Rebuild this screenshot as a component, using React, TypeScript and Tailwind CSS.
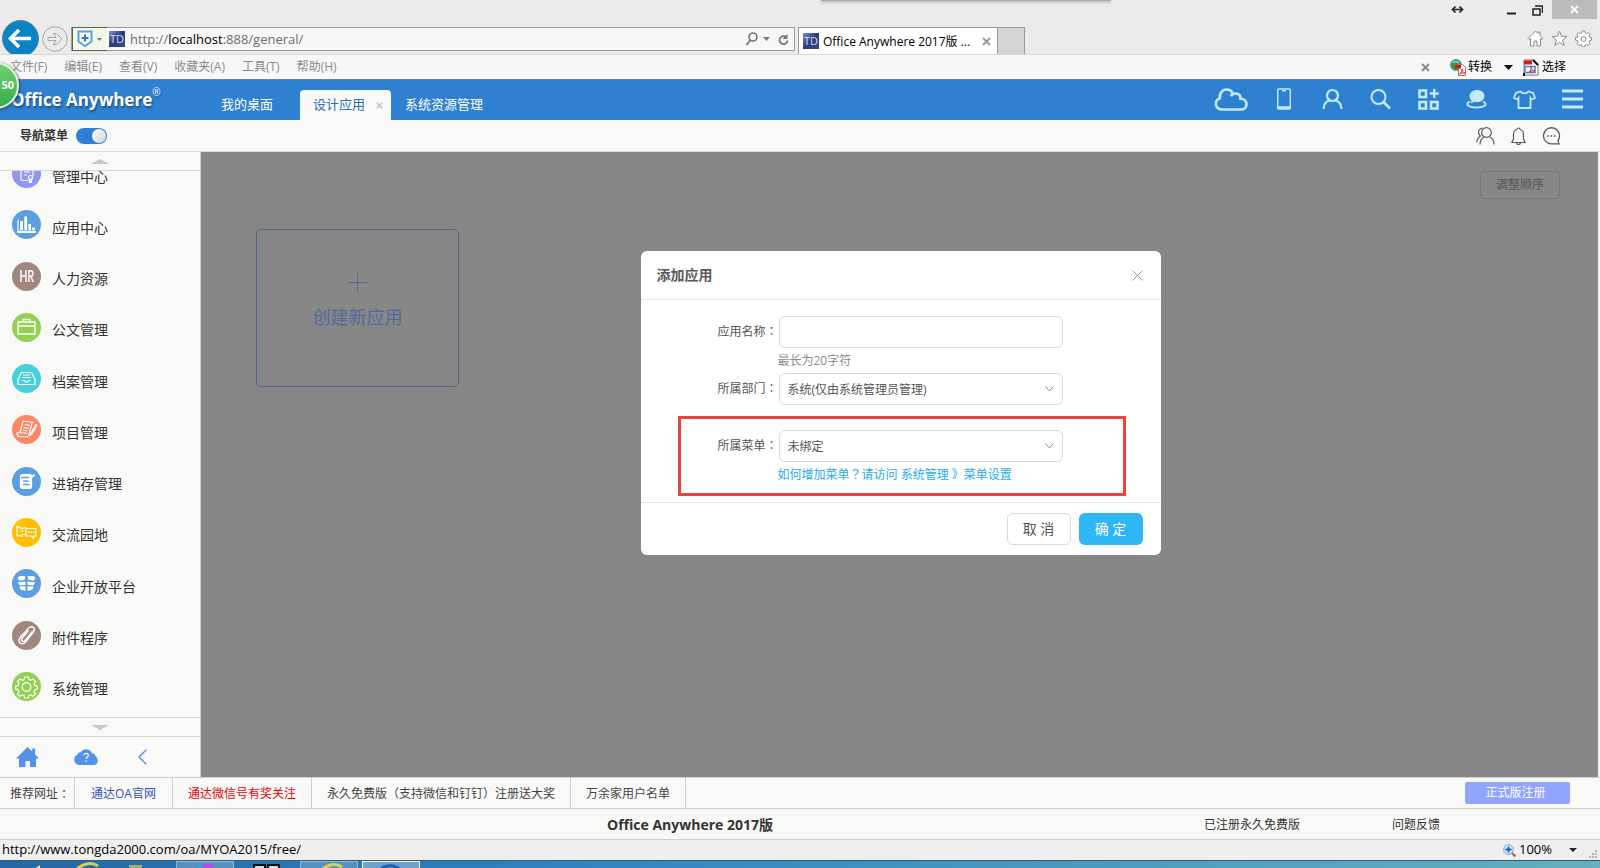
import React from 'react';

const Svg = ({ w, h, box, children, className = '' }: { w: number; h: number; box?: string; children: React.ReactNode; className?: string }) => (
  <svg
    width={w}
    height={h}
    viewBox={box ?? `0 0 ${w} ${h}`}
    fill="none"
    stroke="currentColor"
    aria-hidden="true"
    className={`block shrink-0 ${className}`}
  >
    {children}
  </svg>
);

const Caret = ({ className = '' }: { className?: string }) => (
  <Svg w={9} h={5} className={className}>
    <path d="M0 0h9L4.500 5z" fill="currentColor" stroke="none" />
  </Svg>
);

// Full-width punctuation centred in its cell.
const Mark = ({ children }: { children: string }) => (
  <span className="font-['Noto_Sans_CJK_TC',sans-serif] leading-none">{children}</span>
);

const SiteIcon = () => (
  <span className="flex size-4 shrink-0 items-center justify-center bg-linear-to-br from-[#7f8fc6] via-[#2c3a7c] to-[#3d4b8c] text-[11px] leading-4 text-[#d5daf2]">
    TD
  </span>
);

function TitleBar() {
  return (
    <div className="flex h-5 items-start justify-end pr-[3px]">
      <div className="mr-[338px] flex-1">
        <div className="ml-auto h-px w-[290px] bg-[#a9a9a9] shadow-[0_1px_3px_#777]" />
      </div>
      <Svg w={17} h={9} className="mt-[5px] mr-8 text-[#222]">
        <path d="M4 4.500h9M6.500 1.500l-3 3 3 3M10.500 1.500l3 3-3 3" strokeWidth="1.700" />
      </Svg>
      <button aria-label="最小化" className="flex h-5 w-[26px] items-center justify-center">
        <Svg w={9} h={9} className="text-[#222]"><path d="M0 7.500h9" strokeWidth="2" /></Svg>
      </button>
      <button aria-label="还原" className="mr-0.5 flex h-5 w-[26px] items-center justify-center">
        <Svg w={11} h={11} className="text-[#222]"><path d="M1 4h7v6H1zM3 1h7.500v7" strokeWidth="1.500" /></Svg>
      </button>
      <button aria-label="关闭" className="flex h-[19px] w-[45px] items-center justify-center bg-[#bcbcbc]">
        <Svg w={9} h={9} className="text-white"><path d="M1 1l7 7M8 1L1 8" strokeWidth="1.800" /></Svg>
      </button>
    </div>
  );
}

function AddressRow() {
  return (
    <div className="flex h-[34px] items-start overflow-hidden pr-2">
      <button aria-label="后退" className="ml-0.5 size-[37px] shrink-0">
        <Svg w={37} h={37}>
          <circle cx="18.500" cy="18.500" r="18" fill="#0b84c3" stroke="#5f8296" />
          <path d="M9 18.500h20M17 10l-8.500 8.500L17 27" stroke="#fff" strokeWidth="3.600" />
        </Svg>
      </button>
      <button aria-label="前进" className="mt-1.5 ml-[3px] size-[26px] shrink-0">
        <Svg w={26} h={26} className="text-[#a6a6a6]">
          <circle cx="13" cy="13" r="12.300" />
          <path d="M6 11.500h8l-2.500-4h3l5.500 5.500-5.500 5.500h-3l2.500-4H6z" />
        </Svg>
      </button>
      <div className="mt-[7px] ml-[3px] flex h-6 w-[724px] items-center border border-[#9b9b9b] bg-[#f7f7f7]">
        <button aria-label="安全防护" className="flex h-6 w-[35px] shrink-0 items-center gap-1 border border-r-0 border-[#59634f] bg-[#f0f9e8] pl-1">
          <Svg w={16} h={18}>
            <path d="M1.500 1.500h13v10L8 16l-6.500-4.500z" fill="#fff" stroke="#5aa0e0" strokeWidth="2" />
            <path d="M8 4.500v7M4.500 8h7" stroke="#2b71c7" strokeWidth="2" />
          </Svg>
          <Svg w={5} h={3} className="text-[#777]"><path d="M0 0h5L2.500 3z" fill="currentColor" stroke="none" /></Svg>
        </button>
        <span className="ml-0.5"><SiteIcon /></span>
        <div className="ml-[5px] flex-1 pt-0.5 text-[13px] text-[#6d6d6d]">
          http://<span className="text-black">localhost</span>:888/general/
        </div>
        <button aria-label="搜索" className="mr-1">
          <Svg w={14} h={14} className="text-[#777]"><circle cx="8" cy="5" r="4" strokeWidth="1.700" /><path d="M5.500 8L1.500 13" strokeWidth="2" /></Svg>
        </button>
        <Svg w={7} h={4} className="mr-2 text-[#777]"><path d="M0 0h7L3.500 4z" fill="currentColor" stroke="none" /></Svg>
        <button aria-label="刷新" className="mr-[5px]">
          <Svg w={11} h={13} className="text-[#777]"><path d="M9.500 7.500a4 4 0 1 1-1.500-3.500" strokeWidth="1.800" /><path d="M9.500 1v5h-5z" fill="currentColor" stroke="none" /></Svg>
        </button>
      </div>
      <div className="mt-[7px] ml-[3px] flex h-[27px] w-[200px] items-center border border-b-0 border-[#9b9b9b] bg-white pl-1">
        <SiteIcon />
        <span className="ml-1 flex-1 pt-0.5 text-xs whitespace-nowrap text-black">Office Anywhere 2017版 ...</span>
        <button aria-label="关闭标签页" className="mr-1.5">
          <Svg w={9} h={9} className="text-[#999]"><path d="M1 1l7 7M8 1L1 8" strokeWidth="1.800" /></Svg>
        </button>
      </div>
      <button aria-label="新建标签页" className="mt-[7px] h-[27px] w-[27px] border border-b-0 border-l-0 border-[#9b9b9b] bg-[#d4d4d4]" />
      <div className="mt-2.5 ml-auto flex gap-[7px] text-[#8d8d8d]">
        <Svg w={17} h={17}><path d="M1 8.500L8.500 1 11 3.500V2h2v3.500l3 3-1 1-1.500-1V16H10v-5H7v5H3.500V8.500L2 9.500z" fill="#fff" /></Svg>
        <Svg w={17} h={17}><path d="M8.500 1l1.900 5.300 5.600.1-4.400 3.500 1.600 5.600-4.700-3.300-4.700 3.300 1.600-5.600L1 6.400l5.600-.1z" fill="#fff" /></Svg>
        <Svg w={17} h={17}>
          <path d="M7.200 1h2.600l.4 2 1.400.6 1.700-1.100 1.800 1.800L14 6l.5 1.300 2 .4v2.500l-2 .4-.6 1.400 1.100 1.700-1.800 1.800-1.700-1.100-1.300.6-.4 1.900H7.200l-.4-1.900-1.400-.6-1.700 1.100-1.800-1.800L3 12l-.5-1.400-2-.4V7.700l2-.4L3 6 1.900 4.300l1.800-1.800 1.700 1.100L6.800 3z" fill="#fff" />
          <circle cx="8.500" cy="9" r="2.500" />
        </Svg>
      </div>
    </div>
  );
}

function MenuBar() {
  const menus = ['文件(F)', '编辑(E)', '查看(V)', '收藏夹(A)', '工具(T)', '帮助(H)'];
  return (
    <div className="flex h-[26px] shrink-0 items-center border-t border-b border-t-[#d9d9d9] border-b-[#7d7d76] bg-[#f7f7f7] pr-[34px] pl-[10px] text-xs text-[#8b8b8b]">
      <nav className="flex flex-1 gap-[17px]">
        {menus.map((m) => <button key={m}>{m}</button>)}
      </nav>
      <button aria-label="关闭工具栏" className="mr-5">
        <Svg w={9} h={9} className="text-[#888]"><path d="M1 1l7 7M8 1L1 8" strokeWidth="1.800" /></Svg>
      </button>
      <button className="flex items-center gap-0.5 text-black">
        <Svg w={16} h={17}>
          <circle cx="6" cy="6" r="5.500" fill="#2f9a4c" stroke="#5f93b8" />
          <path d="M2.500 4c2-2.500 5-1.500 6.500 0" stroke="#9bd8a8" strokeWidth="1.500" />
          <path d="M8.500 5.500h4l3 3v8h-7z" fill="#fff" stroke="#b06a6a" />
          <path d="M5 6h6v3.500H5z" fill="#d91515" stroke="none" />
          <path d="M9.500 15c2-1 2.500-3 2.500-5 0 2 1.500 3.500 3 4-2-.3-3.500 0-5.500 1z" stroke="#d22" />
        </Svg>
        转换
      </button>
      <Caret className="mr-[10px] ml-3 text-black" />
      <button className="flex items-center gap-[3px] text-black">
        <Svg w={16} h={17}>
          <path d="M1 1h10l4 4v11H1z" fill="#fff" stroke="#777" />
          <path d="M10 1l5 5" stroke="#000" strokeWidth="2" />
          <path d="M1 1.500h8v4H1z" fill="#d91515" stroke="none" />
          <path d="M2 7.500h10v6H2z" stroke="#3f7fd0" strokeWidth="1.500" />
          <path d="M6 13c2-1 2-3 2-5 0 2 2 3.500 4 4-2-.3-4 0-6 1z" stroke="#d22" />
          <path d="M0 14h2v3H0z" fill="#000" stroke="none" />
        </Svg>
        选择
      </button>
    </div>
  );
}

const headerIcons: { label: string; icon: React.ReactNode }[] = [
  { label: '手机', icon: <Svg w={14} h={22}><rect x=".7" y="1" width="12.600" height="20" rx="1" strokeWidth="1.400" /><path d="M1 19.500h12" strokeWidth="2.500" /><path d="M5 2.800h4" strokeWidth="1.400" /></Svg> },
  { label: '用户', icon: <Svg w={21} h={22}><circle cx="10.500" cy="7.500" r="5.500" strokeWidth="2.200" /><path d="M1.500 21c.3-4.500 2.500-7.500 6-8.700M19.500 21c-.3-4.500-2.500-7.500-6-8.700" strokeWidth="2.200" /></Svg> },
  { label: '搜索', icon: <Svg w={21} h={22}><circle cx="8.500" cy="9" r="7" strokeWidth="2" /><path d="M13.500 14l6.500 6.500" strokeWidth="2.600" /></Svg> },
  { label: '应用', icon: <Svg w={21} h={21}><path d="M1.500 1.500h6.500v6.500H1.500zM1.500 13h6.500v6.500H1.500zM13 13h6.500v6.500H13z" strokeWidth="2.600" /><path d="M16.200 0v9M11.700 4.500h9" strokeWidth="2.400" /></Svg> },
  { label: '消息', icon: <Svg w={21} h={20}><path d="M11 1c4.200 0 7.500 2.600 7.500 6s-3.300 6.200-7.500 6.200c-1 0-2-.1-2.900-.4-1 1-2.300 1.500-3.600 1.300.8-.8 1.100-1.700 1-2.700C4.300 10.300 3.500 8.700 3.500 7c0-3.400 3.300-6 7.500-6z" fill="currentColor" stroke="none" /><path d="M4 12.500c-5 2.300-2.500 6 6.500 6s11.500-3.700 6.500-6" strokeWidth="1.900" /></Svg> },
  { label: '主题', icon: <Svg w={23} h={19}><path d="M7.500 1.500c1.500 2.500 6.500 2.500 8 0L20 3l2 5-3.500 1.500L17.500 8v10h-12V8l-1 1.500L1 8l2-5z" strokeWidth="1.800" /></Svg> },
  { label: '菜单', icon: <Svg w={21} h={20}><path d="M0 2h21M0 10h21M0 18h21" strokeWidth="3" /></Svg> },
];

function Header() {
  return (
    <header className="flex h-10 shrink-0 bg-[#2e80d1] text-[13px] text-white">
      <div className="flex w-[208px] items-center pl-[11px] text-[17px] font-bold text-shadow-[1px_2px_2px_#1b4f8b]">
        Office Anywhere<span className="mb-4 text-[10px] leading-none font-normal">®</span>
      </div>
      <nav className="flex flex-1 items-end">
        <a href="#desktop" className="mr-3.5 flex h-[30px] items-center px-[13px]">我的桌面</a>
        <div className="flex h-[30px] items-center rounded-t bg-[#fafafa] pr-2 pl-[13px]">
          <a href="#design" className="text-[#2e6fb5]">设计应用</a>
          <button aria-label="关闭设计应用" className="ml-[11px]">
            <Svg w={7} h={7} className="text-[#c9c9c9]"><path d="M.7.700l5.600 5.600M6.300.7L.7 6.300" strokeWidth="1.800" /></Svg>
          </button>
        </div>
        <a href="#resource" className="flex h-[30px] items-center px-3.5">系统资源管理</a>
      </nav>
      <div className="flex items-center pr-1 pb-0.5 text-[#c3eaff]">
        <button aria-label="云盘" className="flex w-[58px] justify-center">
          <Svg w={34} h={23}>
            <path d="M7.500 21.500a5.800 5.800 0 0 1-1.700-11.300C5.200 5.500 8.300 1.500 12.500 1.500c3.300 0 5.600 1.800 6.700 4.500 3.500-1.500 7.500.5 7.300 4.700 3.600.2 6 2.400 6 5.500 0 3-2.300 5.300-5.500 5.300zM19.200 6c-1.300.6-2 1.300-2.400 2.200" strokeWidth="2.600" />
          </Svg>
        </button>
        {headerIcons.map((i) => (
          <button key={i.label} aria-label={i.label} className="flex w-12 justify-center">{i.icon}</button>
        ))}
      </div>
    </header>
  );
}

function SubBar() {
  return (
    <div className="flex h-8 shrink-0 items-center border-b border-[#d9dbd9] bg-[#f9faf8] pl-5 text-[#5a5a5a]">
      <label htmlFor="nav-toggle" className="pt-px text-xs font-bold text-[#333]">导航菜单</label>
      <input
        id="nav-toggle"
        type="checkbox"
        defaultChecked
        className="ml-2 flex h-4 w-[31px] appearance-none items-center justify-end rounded-full bg-[#2e80d1] pr-px before:size-3.5 before:rounded-full before:bg-linear-to-br before:from-white before:to-[#cfd3d8]"
      />
      <div className="ml-auto flex pr-8">
        <button aria-label="联系人" className="flex w-[33px] justify-center">
          <Svg w={19} h={18}>
            <circle cx="10.500" cy="5.500" r="4.800" strokeWidth="1.200" />
            <path d="M4 17.500c.2-4 1.800-6.500 4.500-7.700M18 17.500c-.2-4-1.600-6.500-4.500-7.700M6.500 1.200C3.500 1.500 2 4 2.700 6.500c.3 1.200 1 2 1.800 2.600C2.300 10.500 1 12.800.8 15.500" strokeWidth="1.200" />
          </Svg>
        </button>
        <button aria-label="通知" className="flex w-[33px] justify-center">
          <Svg w={15} h={18}><path d="M6 2.500c-2.500.7-3.500 2.500-3.500 5V12L.8 15.500h13.400L12.500 12V7.500c0-2.500-1-4.300-3.500-5M6 2.500a1.500 1.500 0 0 1 3 0M5.500 15.500a2 2 0 0 0 4 0" strokeWidth="1.200" /></Svg>
        </button>
        <button aria-label="会话" className="flex w-[33px] justify-center">
          <Svg w={19} h={18}><path d="M17 16.800h-7A8 8 0 1 1 16 13.500c.2 1.200.5 2.200 1 3.300z" strokeWidth="1.300" /><path d="M5 9h1.700M8.500 9h1.700M12 9h1.700" strokeWidth="1.700" /></Svg>
        </button>
      </div>
    </div>
  );
}

const Disc = ({ fill, children }: { fill: string; children: React.ReactNode }) => (
  <Svg w={29} h={29}>
    <circle cx="14.500" cy="14.500" r="14.500" fill={fill} stroke="none" />
    <g stroke="#fff" strokeWidth="1.200">{children}</g>
  </Svg>
);

const navItems: { name: string; icon: React.ReactNode }[] = [
  { name: '管理中心', icon: <Disc fill="#8f96f5"><path d="M21 17V6H9c-1 0-1.500.5-1.500 1.500V10M9 8v12c0 1 .8 1.500 1.500 1.500H16M12 10h6M12 13h6M12 16h3" /><circle cx="18.500" cy="18.500" r="2" /><path d="M17.500 20.500V23l1-.8 1 .8v-2.500" /></Disc> },
  { name: '应用中心', icon: <Disc fill="#5c9fe0"><path d="M6 9.500v13h18" /><path d="M5.500 21.700h18.500" strokeWidth="2" /><path d="M9.500 20V11M13.700 20V6.500M17.700 20v-6M21.500 20v-2.500" strokeWidth="2.700" /></Disc> },
  { name: '人力资源', icon: <Disc fill="#a1887f"><path d="M9 8v12M14 8v12M9 14h5M17 20V8.700h1.700c1.500 0 2.300 1.100 2.300 2.800s-.8 2.800-2.300 2.800H17M19 14.500l2.200 5.500" strokeWidth="1.400" /></Disc> },
  { name: '公文管理', icon: <Disc fill="#93cf52"><path d="M6 9h17v12H6zM6 13h17M11 9V6.500h7V9" strokeWidth="1.300" /></Disc> },
  { name: '档案管理', icon: <Disc fill="#48cfdc"><path d="M9.500 8.500h10l3.500 7v5H6v-5zM10.500 16.500h2l1 1.500h2l1-1.500h2M11 11h7M10 13.500h9" /></Disc> },
  { name: '项目管理', icon: <Disc fill="#ff8663"><path d="M11 6l11 1.500M11 6L8 17.500M20 8l-3.500 13M8 17.500l-3 .5c0 2 1 3.500 3 3.700l8.500.3M8 17.500c2 .3 5 .3 7 1M12.500 9.500l5 .8M11.700 12.500l5 .8M11 15l4 .8M24 9.500l-5 8.500-.5 2 1.500-1.300 5-8.200z" /></Disc> },
  { name: '进销存管理', icon: <Disc fill="#5c9fe0"><rect x="8.500" y="7.500" width="11" height="14" rx="2" fill="#fff" /><path d="M9 10.500h8M11 14h6.500M11 17.500h6.500" stroke="#5c9fe0" strokeWidth="1.500" /><path d="M22.500 7.500L16 13.500" strokeWidth="1.800" /></Disc> },
  { name: '交流园地', icon: <Disc fill="#ffbf00"><path d="M14 11V9.500l-4 1L5 8.500v9.500l2-.5 3 1v-2h4M14 10.500h10v7.500h-2.500v2l-2.500-2h-5zM8.500 13h3" /><path d="M16 14.300h1.500M18.500 14.300H20M21 14.300h1.500" strokeWidth="1.600" /></Disc> },
  { name: '企业开放平台', icon: <Disc fill="#5c9fe0"><path d="M5.500 8.500L8 7l5.500.3-1 3.700-5.500.5zM23.500 8.500L21 7l-5.500.3 1 3.700 5.500.5zM5.500 13.500l8-1v3.300l-5.500.7zM23.500 13.500l-8-1v3.300l5.500.7zM7.500 17.500l6-.3V22l-5-1.500zM21.500 17.500l-6-.3V22l5-1.500z" fill="#fff" stroke="none" /></Disc> },
  { name: '附件程序', icon: <Disc fill="#a1887f"><path d="M20.500 10.500L13 19.500c-1 1.200-2.300 1.300-3 .5s-.7-1.800.2-3l6.300-7.500M17 16.500l4-5c1.500-2 1.800-3.800.3-5s-3.500-.8-5 .9L8.500 16c-2 2.400-2 4.600-.5 6s3.800 1 5.500-.9l3.500-4.300" strokeWidth="1.400" /></Disc> },
  { name: '系统管理', icon: <Disc fill="#93cf52"><path d="M12.700 5h3.600l.6 2.500 1.800.8 2.300-1.300 2.400 2.400-1.300 2.300.8 1.800 2.400.6v3l-2.400.6-.8 1.800 1.300 2.300-2.400 2.400-2.300-1.300-1.800.8-.6 2.300h-3.600l-.6-2.300-1.800-.8L8 24.200l-2.400-2.400 1.300-2.300-.8-1.800-2.400-.6v-3l2.400-.6.8-1.800L5.600 9.400 8 7l2.300 1.300 1.800-.8z" /><circle cx="14.500" cy="15" r="4.300" /></Disc> },
];

function Sidebar() {
  return (
    <aside className="flex w-[201px] shrink-0 flex-col border-r border-[#cfd1cf] bg-[#f9faf8]">
      <button aria-label="向上滚动" className="flex h-[19px] shrink-0 items-center justify-center border-b border-[#d6d8d6]">
        <Svg w={18} h={5} className="text-[#c1c8d2]"><path d="M0 5l9-5 9 5z" fill="currentColor" stroke="none" /></Svg>
      </button>
      <nav className="flex min-h-0 flex-1 flex-col overflow-hidden pb-0.5">
        <ul className="-mt-5 flex flex-1 flex-col">
          {navItems.map((item) => (
            <li key={item.name} className="flex flex-1 items-center">
              <a href="#nav" className="flex items-center gap-[11px] pl-3 text-sm text-[#333]">
                <span className="mb-1.5">{item.icon}</span>
                {item.name}
              </a>
            </li>
          ))}
        </ul>
      </nav>
      <button aria-label="向下滚动" className="flex h-5 shrink-0 items-center justify-center border-t border-b border-[#d6d8d6] pt-px">
        <Svg w={18} h={5} className="text-[#c1c8d2]"><path d="M0 0l9 5 9-5z" fill="currentColor" stroke="none" /></Svg>
      </button>
      <div className="flex h-10 shrink-0 items-center pl-4 text-[#5292ea]">
        <button aria-label="首页">
          <Svg w={23} h={20}><path d="M11.500 0l4.700 4.600V1.500h3V7.500L23 11.500h-3V20h-6v-6H9.500v6H3v-8.500H0z" fill="currentColor" stroke="none" /></Svg>
        </button>
        <button aria-label="帮助" className="ml-[35px] flex">
          <Svg w={24} h={16}>
            <path d="M5.500 16A5.400 5.400 0 0 1 3.500 5.700C4 3.500 5.500 3 7 3.200 8.500.8 11 0 13.500.5c2.500.4 4 2 4.500 4 2.500-.2 3.300 1 3.500 2.700C25 9.500 24.500 16 19.500 16z" fill="currentColor" stroke="none" />
            <path d="M10 6.300c0-2.700 4.300-2.500 4.300.1 0 1.700-2.200 1.700-2.200 3.600M12.100 11.500v1.500" stroke="#fff" strokeWidth="1.200" />
          </Svg>
        </button>
        <button aria-label="收起" className="ml-10">
          <Svg w={9} h={16}><path d="M8.300.7L1 8l7.300 7.300" strokeWidth="1.400" /></Svg>
        </button>
      </div>
    </aside>
  );
}

function SelectField({ id, value }: { id: string; value: string }) {
  return (
    <div className="relative">
      <select id={id} defaultValue={value} className="block h-8 w-[284px] appearance-none rounded-md border border-[#d9d9d9] bg-white pt-px pl-2 text-xs text-[#555]">
        <option>{value}</option>
      </select>
      <Svg w={9} h={6} className="pointer-events-none absolute top-[13px] right-[9px] text-[#888]"><path d="M.5.500l4 4.500 4-4.500" /></Svg>
    </div>
  );
}

function Dialog() {
  return (
    <div role="dialog" aria-label="添加应用" className="w-[520px] rounded-md bg-white text-xs text-[#555]">
      <div className="flex h-[49px] items-center justify-between border-b border-[#e6e6e6] pr-[18px] pl-4">
        <h2 className="text-sm font-bold text-[#595959]">添加应用</h2>
        <button aria-label="关闭"><Svg w={11} h={11} className="text-[#999]"><path d="M.5.500l10 10M10.500.500l-10 10" /></Svg></button>
      </div>
      <form className="pt-4 pb-1.5">
        <div className="flex items-center pl-[77px]">
          <label htmlFor="app-name" className="w-[61px] whitespace-nowrap">应用名称<Mark>：</Mark></label>
          <input id="app-name" type="text" maxLength={20} className="h-8 w-[284px] rounded-md border border-[#d9d9d9] px-2" />
        </div>
        <p className="flex h-[25px] items-center pl-[137px] text-[#8c8c8c]">最长为20字符</p>
        <div className="flex items-center pl-[77px]">
          <label htmlFor="app-dept" className="w-[61px] whitespace-nowrap">所属部门<Mark>：</Mark></label>
          <SelectField id="app-dept" value="系统(仅由系统管理员管理)" />
        </div>
        <div className="mt-[11px] mr-[35px] ml-[37px] h-20 border-[3px] border-[#ee4040] pt-[11px]">
          <div className="flex items-center pl-[37px]">
            <label htmlFor="app-menu" className="w-[61px] whitespace-nowrap">所属菜单<Mark>：</Mark></label>
            <SelectField id="app-menu" value="未绑定" />
          </div>
          <p className="flex h-[25px] items-center pl-[97px] text-[#2aa9ea]">
            <a href="#menu-settings">如何增加菜单<Mark>？</Mark>请访问 系统管理 》菜单设置</a>
          </p>
        </div>
      </form>
      <div className="flex h-[53px] justify-end gap-2 border-t border-[#e6e6e6] pt-2.5 pr-[18px] text-sm">
        <button className="h-8 w-16 rounded-md border border-[#d9d9d9]">取 消</button>
        <button className="h-8 w-16 rounded-md bg-[#2db7f5] text-white">确 定</button>
      </div>
    </div>
  );
}

function Workspace() {
  return (
    <main className="relative mr-0.5 flex-1 bg-[#878787]">
      <div className="flex justify-end pt-[19px] pr-[38px]">
        <button className="h-7 w-20 rounded border border-[#777] text-xs text-[#555]">调整顺序</button>
      </div>
      <button className="mt-[30px] ml-[55px] flex h-[158px] w-[203px] flex-col items-center rounded border border-[#52688c] pt-[43px] text-lg text-[#4e6c9b]">
        <Svg w={19} h={19} className="mb-[11px]"><path d="M9.500 0v19M0 9.500h19" /></Svg>
        创建新应用
      </button>
      <div className="absolute inset-0 flex items-start justify-center pt-[99px] pl-0.5">
        <Dialog />
      </div>
    </main>
  );
}

function Footer() {
  return (
    <footer className="shrink-0 bg-[#f9faf8] text-xs text-[#444]">
      <div className="flex h-8 border-t border-b border-[#cfcfcf]">
        <span className="flex w-[75px] items-center border-r border-[#cfcfcf] pt-px pl-2.5">推荐网址<Mark>：</Mark></span>
        <a href="#site" className="flex items-center border-r border-[#cfcfcf] px-4 pt-px text-[#3a4fc0]">通达OA官网</a>
        <a href="#wechat" className="flex items-center border-r border-[#cfcfcf] px-[15px] pt-px text-[#f00000]">通达微信号有奖关注</a>
        <a href="#free" className="flex items-center border-r border-[#cfcfcf] px-[15px] pt-px">永久免费版（支持微信和钉钉）注册送大奖</a>
        <a href="#users" className="flex items-center border-r border-[#cfcfcf] px-[15px] pt-px">万余家用户名单</a>
        <button className="mt-1 mr-[30px] ml-auto h-[22px] w-[105px] rounded-xs bg-[#8fa5ff] pr-1 text-white">正式版注册</button>
      </div>
      <div className="flex h-[30px] items-center pt-px">
        <strong className="flex-1 pl-44 text-center text-sm text-[#333]">Office Anywhere 2017版</strong>
        <div className="flex w-[396px] gap-[92px] text-[#333]">
          <span>已注册永久免费版</span>
          <a href="#feedback">问题反馈</a>
        </div>
      </div>
    </footer>
  );
}

function StatusBar() {
  return (
    <div className="flex h-[21px] shrink-0 items-center border-t border-[#cfcfcf] bg-[#efefef] pr-0.5 pl-0.5 text-[13px] text-black">
      <span className="flex-1">http://www.tongda2000.com/oa/MYOA2015/free/</span>
      <button className="flex items-center gap-[3px]">
        <Svg w={13} h={13}>
          <circle cx="5.500" cy="5.500" r="4.800" fill="#d9ecfb" stroke="#6fa3d0" />
          <path d="M5.500 2.500v6M2.500 5.500h6" stroke="#1764b4" strokeWidth="1.800" />
          <path d="M9 9l3.500 3.500" stroke="#a86c38" strokeWidth="2.400" />
        </Svg>
        100%
      </button>
      <Svg w={8} h={4} className="mr-3 ml-[17px]"><path d="M0 0h8L4 4z" fill="#222" stroke="none" /></Svg>
      <Svg w={9} h={9} className="mt-2"><path d="M6 1h2M3 4h2M6 4h2M0 7h2M3 7h2M6 7h2" stroke="#b5b5b5" strokeWidth="2" /></Svg>
    </div>
  );
}

function Taskbar() {
  const slot = 'flex h-2 w-[58px] justify-center overflow-hidden';
  const open = 'border border-b-0 border-[#8db5d6] bg-[#5690be]';
  return (
    <div className="flex h-2 shrink-0 gap-1 overflow-hidden border-t border-[#2a5f86] bg-linear-to-r from-[#2467a2] via-[#2f83c0] via-35% to-[#64b0bd]">
      <div className={slot}><Svg w={30} h={8}><path d="M20 8l6-4v4z" fill="#d8e6ef" stroke="none" /></Svg></div>
      <div className={slot}><Svg w={40} h={8}><path d="M6 8C13 2 21 1 27 5" stroke="#d9cf57" strokeWidth="3" /></Svg></div>
      <div className="flex h-2 w-12 justify-start"><Svg w={20} h={8}><path d="M5 4h13v4H5z" fill="#a5a877" stroke="none" /></Svg></div>
      <div className={`${slot} ${open}`}><Svg w={24} h={8}><path d="M4 5h6v3H4z" fill="#3aa4e8" stroke="none" /><path d="M10 2h10v6H10z" fill="#b64be8" stroke="none" /></Svg></div>
      <div className={slot}><Svg w={28} h={8}><path d="M1 8V4h11v4M15 8V4h11v4" fill="#d5dde2" stroke="#111" strokeWidth="2" /></Svg></div>
      <div className={`${slot} ${open}`}><Svg w={40} h={8}><path d="M12 8C19 2 27 1 33 5" stroke="#d9cf57" strokeWidth="3" /></Svg></div>
      <div className={`${slot} border border-b-0 border-white bg-[#6ea2cb]`}><Svg w={30} h={8}><path d="M3 9C8 2 20 2 25 9" stroke="#1f5fb8" strokeWidth="3" /></Svg></div>
    </div>
  );
}

export default function App() {
  return (
    <div className="relative flex h-screen min-h-[700px] flex-col overflow-hidden bg-[#f2f2f2] font-['Open_Sans','Noto_Sans_CJK_SC',sans-serif]">
      <div className="shrink-0 bg-[#ebebeb]">
        <TitleBar />
        <AddressRow />
      </div>
      <MenuBar />
      <Header />
      <SubBar />
      <div className="flex min-h-0 flex-1">
        <Sidebar />
        <Workspace />
      </div>
      <Footer />
      <StatusBar />
      <Taskbar />
      <div className="absolute top-[62px] -left-7 flex size-[47px] items-center justify-end rounded-full border-2 border-[#dff3df] bg-linear-to-b from-[#74cf70] to-[#2fae45] pr-[3px] text-[11px] font-bold text-white shadow-[1px_1px_3px_#345]">
        50
      </div>
    </div>
  );
}
